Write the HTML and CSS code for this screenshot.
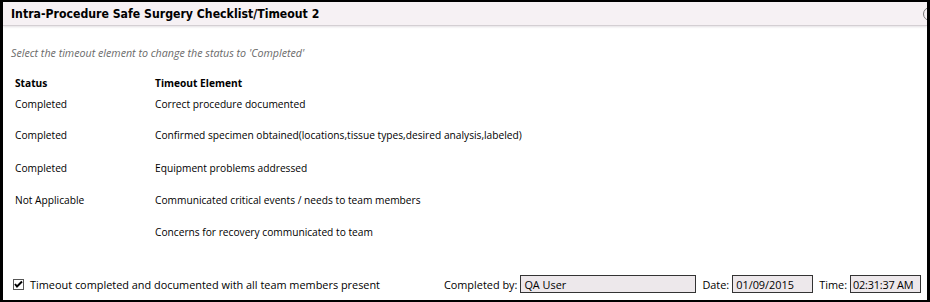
FILE: index.html
```html
<!DOCTYPE html>
<html>
    <head>
        <meta http-equiv="Content-Type" content="text/html; charset=UTF-8">
        <title>Intra-Procedure Safe Surgery Checklist/Timeout 2</title>
        <link rel="stylesheet" href="styles.css">
    </head>
    <body>
        <div class="dialog">
            <div class="titlebar">
                <h1>Intra-Procedure Safe Surgery Checklist/Timeout 2</h1>
                <span class="close"></span>
            </div>
            <div class="content">
                <p class="hint">Select the timeout element to change the status to 'Completed'</p>
                <div class="grid">
                    <div class="th">Status</div>
                    <div class="th">Timeout Element</div>

                    <div class="td">Completed</div>
                    <div class="td">Correct procedure documented</div>

                    <div class="td">Completed</div>
                    <div class="td">Confirmed specimen obtained(locations,tissue types,desired analysis,labeled)</div>

                    <div class="td">Completed</div>
                    <div class="td">Equipment problems addressed</div>

                    <div class="td">Not Applicable</div>
                    <div class="td">Communicated critical events / needs to team members</div>

                    <div class="td"></div>
                    <div class="td">Concerns for recovery communicated to team</div>
                </div>
            </div>
            <div class="footer">
                <label class="check">
                    <span class="box">
                        <svg width="9" height="9" viewBox="0 0 9 9"><path d="M1 4 L3 6.5 L8 1.5" fill="none" stroke="#000" stroke-width="2"/></svg>
                    </span>
                    Timeout completed and documented with all team members present
                </label>
                <div class="fields">
                    <span class="lbl">Completed by:</span>
                    <span class="field user">QA User</span>
                    <span class="lbl">Date:</span>
                    <span class="field date">01/09/2015</span>
                    <span class="lbl">Time:</span>
                    <span class="field time">02:31:37 AM</span>
                </div>
            </div>
        </div>
    </body>
</html>
```
FILE: styles.css
```css
html, body {
    margin: 0;
    height: 100%;
}
body {
    background: #000;
    padding: 2px 3px 2px 3px;
    box-sizing: border-box;
    font-family: "Open Sans", sans-serif;
    font-size: 10.2px;
    color: #000;
}
.dialog {
    background: #fff;
    height: 100%;
    display: flex;
    flex-direction: column;
    overflow: hidden;
}
.titlebar {
    height: 23px;
    background: #f6f1f4;
    border-bottom: 1px solid #d4cfd3;
    box-shadow: 0 1px 2px #e4e0e3;
    display: flex;
    align-items: center;
    justify-content: space-between;
    padding-left: 8px;
}
h1 {
    margin: 0;
    font-family: "DejaVu Sans Condensed", "DejaVu Sans", sans-serif;
    font-stretch: condensed;
    font-size: 12.2px;
    font-weight: bold;
}
.close {
    width: 12px;
    height: 12px;
    border: 1px solid #777;
    border-radius: 50%;
    margin-right: -10px;
}
.content {
    flex: 1;
    padding: 0 0 0 8px;
}
.hint {
    margin: 20px 0 0 0;
    font-style: italic;
    font-size: 10.7px;
    color: #6a6a6a;
}
.grid {
    display: grid;
    grid-template-columns: 140px 1fr;
    grid-template-rows: 21px 31px 33px;
    grid-auto-rows: 32px;
    margin-top: 16px;
    padding-left: 4px;
}
.grid .th {
    font-weight: bold;
}
.grid .th, .grid .td {
    line-height: 15px;
}
.footer {
    display: flex;
    justify-content: space-between;
    align-items: center;
    height: 24px;
    padding: 0 6px 4px 10px;
    font-size: 10.9px;
    white-space: nowrap;
}
.check {
    display: flex;
    align-items: center;
    gap: 6px;
}
.box {
    width: 11px;
    height: 11px;
    border: 1px solid #555;
    box-sizing: border-box;
    display: flex;
    align-items: center;
    justify-content: center;
}
.fields {
    display: flex;
    align-items: center;
    gap: 3px;
}
.field {
    height: 18px;
    line-height: 17px;
    box-sizing: border-box;
    background: #ede8eb;
    border: 1px solid #333;
    padding: 0 3px;
    margin-right: 3px;
}
.user { width: 176px; }
.date { width: 81px; }
.time { width: 71px; margin-right: 0; padding: 0 2px; letter-spacing: -0.2px; }
```
